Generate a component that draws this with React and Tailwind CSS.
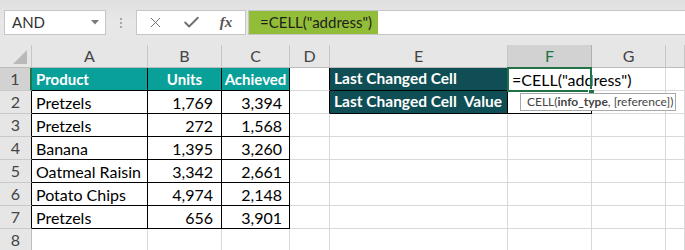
import React from "react";
import { X, Check } from "lucide-react";

const font = { fontFamily: "Lato, 'Open Sans', sans-serif" };

const data = [
  ["Pretzels", "1,769", "3,394"],
  ["Pretzels", "272", "1,568"],
  ["Banana", "1,395", "3,260"],
  ["Oatmeal Raisin", "3,342", "2,661"],
  ["Potato Chips", "4,974", "2,148"],
  ["Pretzels", "656", "3,901"],
];

function Toolbar() {
  return (
    <div className="h-[45px] bg-gradient-to-b from-[#e0e0e0] via-[#e8e8e8] to-[#e6e6e6] flex items-start pt-[10px]">
      <div className="ml-[4px] w-[102px] h-[25px] bg-white border border-[#c6c6c6] flex items-center justify-between pl-[7px] pr-[6px]">
        <span className="text-[15px] text-[#333]">AND</span>
        <svg width="8" height="5" viewBox="0 0 8 5"><path d="M0 0h8L4 4.5z" fill="#7a7a7a" /></svg>
      </div>
      <div className="w-[30px] h-[25px] flex flex-col items-center justify-center gap-[2px]">
        <span className="w-[2px] h-[2px] bg-[#a8a8a8]" />
        <span className="w-[2px] h-[2px] bg-[#a8a8a8]" />
        <span className="w-[2px] h-[2px] bg-[#a8a8a8]" />
      </div>
      <div className="w-[110px] h-[25px] bg-white border border-[#c6c6c6] flex items-center">
        <span className="w-[36px] flex justify-center"><X size={17} strokeWidth={1.4} color="#707070" /></span>
        <span className="w-[36px] flex justify-center"><Check size={19} strokeWidth={2.4} color="#707070" /></span>
        <span className="w-[34px] flex justify-center text-[15px] italic text-[#555] font-bold" style={{ fontFamily: "'Liberation Serif', serif" }}>fx</span>
      </div>
      <div className="ml-[2px] flex-1 h-[25px] bg-white border-y border-l border-[#c6c6c6] flex items-stretch">
        <div className="w-[129px] bg-[#92bd38] flex items-center pl-[11px] text-[15px] text-[#1e1e1e] whitespace-nowrap">=CELL("address")</div>
      </div>
    </div>
  );
}

function ColHeader({ label, selected }) {
  return (
    <div
      className={
        selected
          ? "h-[23px] bg-[#d2d2d2] border-r border-b border-r-[#b0b0b0] border-b-[#bdbdbd] flex items-center justify-center text-[16px] text-[#217346]"
          : "h-[23px] bg-[#e6e6e6] border-r border-b border-r-[#c6c6c6] border-b-[#bdbdbd] flex items-center justify-center text-[16px] text-[#444]"
      }
    >
      {label}
    </div>
  );
}

function RowHeader({ n, selected, boxed }) {
  let cls = "h-[23px] bg-[#e6e6e6] border-r border-b border-b-[#c9c9c9] border-r-[#bdbdbd] flex items-center justify-center text-[16px] text-[#444]";
  if (selected) cls = "h-[23px] bg-[#d2d2d2] border-r-2 border-b border-b-[#c9c9c9] border-r-[#217346] flex items-center justify-center text-[16px] text-[#444]";
  else if (boxed) cls = "h-[23px] bg-[#e6e6e6] border-r border-b border-b-[#c9c9c9] border-r-black flex items-center justify-center text-[16px] text-[#444]";
  return <div className={cls}>{n}</div>;
}

const plain = "h-[23px] bg-white border-r border-b border-[#d9d9d9]";
const dRight = "h-[23px] bg-white border-r border-b border-r-black border-b-[#d9d9d9]";
const tbl = "h-[23px] bg-white border-r border-b border-black flex items-center pt-[1px] text-[16px] text-black whitespace-nowrap";
const head = "h-[23px] bg-[#0aa09a] border-r border-b border-black flex items-center text-[15px] font-bold text-white whitespace-nowrap";
const dark = "h-[23px] bg-[#0e4e54] border-r border-b border-black flex items-center pl-[4px] text-[15.5px] font-bold text-white whitespace-pre";

export default function App() {
  return (
    <div className="w-[685px] h-[250px] overflow-hidden bg-white" style={font}>
      <Toolbar />
      <div className="grid grid-cols-[32px_116px_74px_68px_40px_178px_84px_74px_1fr]">
        {/* header row */}
        <div className="h-[23px] bg-[#e6e6e6] border-r border-b border-r-[#c6c6c6] border-b-[#bdbdbd] flex items-end justify-end pr-[4px] pb-[3px]">
          <svg width="14" height="14" viewBox="0 0 14 14"><path d="M14 0V14H0z" fill="#b9b9b9" /></svg>
        </div>
        <ColHeader label="A" />
        <ColHeader label="B" />
        <ColHeader label="C" />
        <ColHeader label="D" />
        <ColHeader label="E" />
        <ColHeader label="F" selected />
        <ColHeader label="G" />
        <ColHeader label="" />

        {/* row 1 */}
        <RowHeader n={1} selected />
        <div className={head + " pl-[4px]"}>Product</div>
        <div className={head + " justify-center"}>Units</div>
        <div className={head + " justify-center"}>Achieved</div>
        <div className={dRight} />
        <div className={dark}>Last Changed Cell</div>
        <div className="relative h-[23px] bg-white border-b border-black z-10">
          <div className="absolute left-[4px] top-0 h-[23px] flex items-center text-[16px] text-black whitespace-nowrap">=CELL("address")</div>
          <div className="absolute -left-[1px] -top-[1px] w-[85px] h-[25px] border-2 border-[#217346]" />
          <div className="absolute left-[80px] top-[21px] w-[6px] h-[5px] bg-[#217346] border-l border-t border-white" />
          <div className="absolute left-[12px] top-[25px] w-[156px] h-[18px] bg-white border border-[#a8a8a8] flex items-center pl-[6px] text-[12px] text-[#444] whitespace-nowrap">
            CELL(<span className="font-bold">info_type</span>, [reference])
          </div>
        </div>
        <div className={plain} />
        <div className={plain} />

        {/* row 2 */}
        <RowHeader n={2} boxed />
        <div className={tbl + " pl-[4px]"}>{data[0][0]}</div>
        <div className={tbl + " justify-end pr-[8px]"}>{data[0][1]}</div>
        <div className={tbl + " justify-end pr-[7px]"}>{data[0][2]}</div>
        <div className={dRight} />
        <div className={dark}>{"Last Changed Cell  Value"}</div>
        <div className="h-[23px] bg-white border-r border-b border-black" />
        <div className={plain} />
        <div className={plain} />

        {/* rows 3-7 */}
        {data.slice(1).map((r, i) => (
          <React.Fragment key={"r" + i}>
            <RowHeader n={i + 3} boxed />
            <div className={tbl + " pl-[4px]"}>{r[0]}</div>
            <div className={tbl + " justify-end pr-[8px]"}>{r[1]}</div>
            <div className={tbl + " justify-end pr-[7px]"}>{r[2]}</div>
            <div className={plain} />
            <div className={plain} />
            <div className={plain} />
            <div className={plain} />
            <div className={plain} />
          </React.Fragment>
        ))}

        {/* row 8 */}
        <RowHeader n={8} />
        <div className={plain} />
        <div className={plain} />
        <div className={plain} />
        <div className={plain} />
        <div className={plain} />
        <div className={plain} />
        <div className={plain} />
        <div className={plain} />
      </div>
    </div>
  );
}
